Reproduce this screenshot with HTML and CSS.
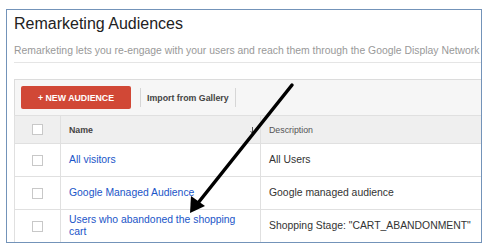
FILE: index.html
```html
<!DOCTYPE html>
<html lang="en">
<head>
    <meta charset="UTF-8">
    <title>Remarketing Audiences</title>
    <link rel="stylesheet" href="styles.css">
</head>
<body>
    <div class="frame">
        <h1 class="title">Remarketing Audiences</h1>
        <p class="intro">Remarketing lets you re-engage with your users and reach them through the Google Display Network</p>

        <div class="panel">
            <div class="toolbar">
                <button class="btn-new">+ NEW AUDIENCE</button>
                <span class="sep"></span>
                <button class="btn-plain">Import from Gallery</button>
                <span class="sep"></span>
            </div>

            <table class="grid">
                <colgroup>
                    <col class="col-check">
                    <col class="col-name">
                    <col>
                </colgroup>
                <thead>
                    <tr>
                        <th class="cell-check"><span class="checkbox"></span></th>
                        <th class="th-sorted">Name
                            <svg class="sort-icon" width="5" height="7" viewBox="0 0 5 7">
                                <line x1="2.5" y1="0" x2="2.5" y2="6" stroke="#555" stroke-width="1"/>
                                <polyline points="0.5,4 2.5,6.5 4.5,4" fill="none" stroke="#555" stroke-width="1"/>
                            </svg>
                        </th>
                        <th>Description</th>
                    </tr>
                </thead>
                <tbody>
                    <tr>
                        <td class="cell-check"><span class="checkbox"></span></td>
                        <td><a href="#">All visitors</a></td>
                        <td>All Users</td>
                    </tr>
                    <tr>
                        <td class="cell-check"><span class="checkbox"></span></td>
                        <td><a href="#">Google Managed Audience</a></td>
                        <td>Google managed audience</td>
                    </tr>
                    <tr>
                        <td class="cell-check"><span class="checkbox"></span></td>
                        <td><a href="#">Users who abandoned the shopping cart</a></td>
                        <td>Shopping Stage: "CART_ABANDONMENT"</td>
                    </tr>
                </tbody>
            </table>
        </div>
    </div>

    <!-- annotation arrow drawn over the screenshot -->
    <svg class="annotation" width="487" height="252" viewBox="0 0 487 252">
        <line x1="292" y1="85" x2="198" y2="203" stroke="#000" stroke-width="3.5" stroke-linecap="round"/>
        <polygon points="190,213 191,196 205,206" fill="#000"/>
    </svg>
</body>
</html>
```

FILE: styles.css
```css
body {
    margin: 0;
    background-color: #fff;
    font-family: "Liberation Sans", Arial, sans-serif;
    color: #333;
}
.frame {
    box-sizing: border-box;
    width: 476px;
    height: 234px;
    margin: 9px 0 0 6px;
    padding-left: 7px;
    border: 1px solid #7393b9;
    overflow: hidden;
}
.title {
    margin: 5px 0 0 0;
    font-size: 16px;
    line-height: 18px;
    font-weight: normal;
    color: #222;
}
.intro {
    margin: 12px 0 0 0;
    padding-bottom: 5px;
    font-size: 10.4px;
    line-height: 12px;
    color: #999;
    white-space: nowrap;
    border-bottom: 1px solid #e5e5e5;
}
.panel {
    margin-top: 16px;
}
.toolbar {
    display: flex;
    align-items: center;
    padding: 6px;
    background-color: #f6f6f6;
    border-top: 1px solid #dcdcdc;
    border-left: 1px solid #dcdcdc;
}
.btn-new {
    width: 110px;
    height: 23px;
    margin-right: 9px;
    padding: 0;
    background-color: #d14836;
    color: #fff;
    border: none;
    border-radius: 2px;
    font-family: inherit;
    font-size: 8.8px;
    font-weight: bold;
}
.sep {
    width: 1px;
    height: 19px;
    background-color: #d6d6d6;
}
.btn-plain {
    padding: 0 6px;
    background: none;
    border: none;
    color: #444;
    font-family: inherit;
    font-size: 8.8px;
    font-weight: bold;
}
.grid {
    width: 467px;
    border-collapse: collapse;
    table-layout: fixed;
    font-size: 10.4px;
}
.col-check {
    width: 46px;
}
.col-name {
    width: 200px;
}
.grid th,
.grid td {
    padding: 0 8px;
    text-align: left;
    vertical-align: middle;
    border: 1px solid #e0e0e0;
    border-right: none;
}
.grid th {
    height: 27px;
    background-color: #efefef;
    font-size: 8.8px;
    font-weight: normal;
    color: #555;
}
.grid th.th-sorted {
    font-weight: bold;
    color: #444;
}
.sort-icon {
    float: right;
    margin-top: 2px;
    margin-right: -3px;
}
.grid td {
    height: 32px;
    line-height: 12px;
    color: #333;
}
.grid td a {
    color: #1a55c8;
    text-decoration: none;
}
.grid .cell-check {
    padding: 0;
    text-align: center;
}
.checkbox {
    display: inline-block;
    width: 9px;
    height: 9px;
    border: 1px solid #c8c8c8;
    background-color: #fff;
    vertical-align: middle;
}
.annotation {
    position: absolute;
    left: 0;
    top: 0;
    pointer-events: none;
}
```
